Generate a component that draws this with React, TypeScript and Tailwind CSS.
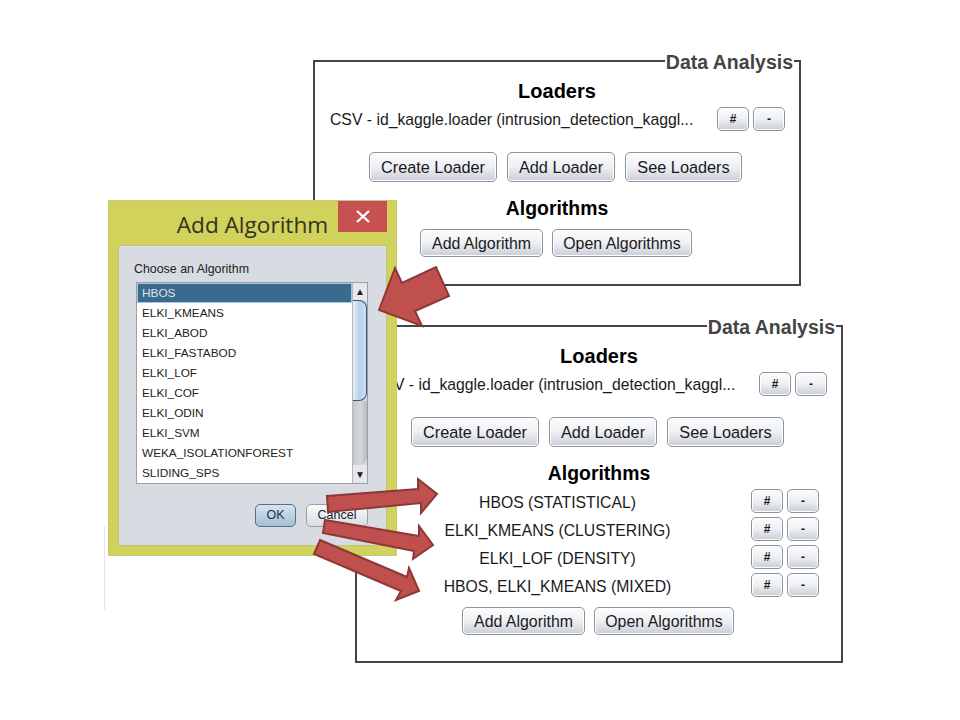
import React from 'react';

const SANS = "font-['Liberation_Sans',Arial,sans-serif]";

const JavaButton = ({ label, className }: { label: string; className: string }) => (
  <button className={`flex items-center justify-center rounded-[5px] border border-[#8b929a] bg-gradient-to-b from-[#fbfcfd] via-[#eef0f4] to-[#c9ced6] text-[#1a1a1a] shadow-[inset_0_0_0_1px_#ffffff] ${className}`}>
    {label}
  </button>
);

const RowButtons = () => (
  <div className="flex gap-1">
    <JavaButton label="#" className="h-6 w-8 text-xs font-bold" />
    <JavaButton label="-" className="h-6 w-8 text-xs font-bold" />
  </div>
);

const LoaderBlock = ({ loaderText }: { loaderText: string }) => (
  <>
    <div className="h-[30px] text-center text-xl leading-[30px] font-bold text-black">Loaders</div>
    <div className="mt-[1px] flex h-6 items-center">
      <div className="w-[402px] overflow-hidden pt-[2px] pl-[15px] text-[15.75px] whitespace-nowrap text-[#1a1a1a]">{loaderText}</div>
      <RowButtons />
    </div>
    <div className="mt-[21px] ml-[54px] flex gap-[10px] text-[16.3px]">
      <JavaButton label="Create Loader" className="h-[30px] w-[128px] pt-[1px]" />
      <JavaButton label="Add Loader" className="h-[30px] w-[108px] pt-[1px]" />
      <JavaButton label="See Loaders" className="h-[30px] w-[117px] pt-[1px]" />
    </div>
    <div className="mt-[11px] h-[30px] text-center text-[19.4px] leading-[30px] font-bold text-black">Algorithms</div>
  </>
);

const AlgorithmButtons = () => (
  <div className="flex justify-center gap-[9px] pr-[2px] text-[15.9px]">
    <JavaButton label="Add Algorithm" className="h-[28px] w-[123px] pt-[1px]" />
    <JavaButton label="Open Algorithms" className="h-[28px] w-[140px] pt-[1px]" />
  </div>
);

const PanelTitle = () => (
  <div className="absolute top-[-12px] right-[5px] bg-white px-[1px] text-[19.5px] leading-[24px] font-bold text-[#444444]">
    Data Analysis
  </div>
);

const algorithms = [
  'HBOS',
  'ELKI_KMEANS',
  'ELKI_ABOD',
  'ELKI_FASTABOD',
  'ELKI_LOF',
  'ELKI_COF',
  'ELKI_ODIN',
  'ELKI_SVM',
  'WEKA_ISOLATIONFOREST',
  'SLIDING_SPS',
];

const results = [
  'HBOS (STATISTICAL)',
  'ELKI_KMEANS (CLUSTERING)',
  'ELKI_LOF (DENSITY)',
  'HBOS, ELKI_KMEANS (MIXED)',
];

const AlgorithmDialog = () => (
  <div className="absolute top-[200px] left-[108px] flex h-[356px] w-[289px] flex-col border border-[#c6c87a] bg-[#d0d25c]">
    <div className="flex h-[44px] shrink-0 items-start justify-between">
      <div className="w-[287px] pt-[9px] text-center font-['Open_Sans',sans-serif] text-[22.6px] leading-[30px] text-[#333322]">
        Add Algorithm
      </div>
      <div className="absolute top-0 right-[9px] flex h-[31px] w-[49px] items-center justify-center bg-[#c75050]">
        <svg width="14" height="13" viewBox="0 0 14 13" fill="none" stroke="#ffffff" strokeWidth="2.2">
          <path d="M1 1 L13 12 M13 1 L1 12" />
        </svg>
      </div>
    </div>
    <div className="mx-[9px] flex h-[301px] flex-col border border-[#c0c285] bg-[#d8dbe2] px-[17px]">
      <div className="mt-[16px] -ml-[2px] h-[15px] text-[12.4px] leading-[15px] text-[#222222]">Choose an Algorithm</div>
      <div className="mt-[5px] flex h-[202px] w-[232px] border border-[#9aa0a8] bg-white">
        <div className="flex-1 text-[11.8px] text-[#222222]">
          {algorithms.map((name, i) => (
            <div
              key={name}
              className={
                i === 0
                  ? 'flex h-[20px] items-center border border-[#a9c4dc] bg-[#3a6a8e] pt-[1px] pl-[4px] text-[#dbe6ee]'
                  : 'flex h-[20px] items-center pt-[1px] pl-[5px]'
              }
            >
              {name}
            </div>
          ))}
        </div>
        <div className="flex w-[15px] flex-col items-center border-l border-[#b4b8be] bg-[#d7d9dd]">
          <div className="flex h-[17px] w-full shrink-0 items-center justify-center bg-[#e6e8eb] text-[10px] text-[#222222]">▲</div>
          <div className="h-[101px] w-full shrink-0 rounded-r-[8px] border-y border-r border-[#38567a] bg-gradient-to-r from-[#e4eef6] via-[#b9d2e8] to-[#cfe0ef]" />
          <div className="w-full flex-1 rounded-br-[8px] bg-gradient-to-r from-[#c4c6ca] via-[#d8d9dc] to-[#b8babe]" />
          <div className="flex h-[18px] w-full shrink-0 items-center justify-center bg-[#e6e8eb] text-[10px] text-[#222222]">▼</div>
        </div>
      </div>
      <div className="mt-[20px] ml-[119px] flex gap-[10px] text-[12.5px]">
        <button className="flex h-[23px] w-[41px] items-center justify-center rounded-[5px] border border-[#54708c] bg-gradient-to-b from-[#d5e3ee] to-[#a6bfd4] text-[#223344]">OK</button>
        <button className="flex h-[23px] w-[62px] items-center justify-center rounded-[5px] border border-[#9aa0a8] bg-gradient-to-b from-[#fbfcfd] to-[#d8dbe2] text-[#222222]">Cancel</button>
      </div>
    </div>
  </div>
);

const Arrows = () => (
  <svg className="absolute top-0 left-0" width="960" height="720" viewBox="0 0 960 720" fill="#c0504d" stroke="#8c3836" strokeWidth="2" strokeLinejoin="miter">
    <path d="M379 310 L395 268 L402 283 L436 267 L449 296 L415 311 L422 326 Z" />
    <path d="M327 496 L418 489 L418 479 L437 494 L421 513 L421 503 L328 512 Z" />
    <path d="M325 520 L419 536 L419 526 L433 545 L413 559 L414 551 L323 533 Z" />
    <path d="M320 540 L407 577 L409 568 L419 591 L396 600 L401 591 L314 554 Z" />
    {/* stray crop marks left of the dialog */}
    <path d="M104.5 526 L104.5 610" fill="none" stroke="#e4e4e4" strokeWidth="1" />
  </svg>
);

export default function App() {
  return (
    <div className={`relative h-[720px] w-[960px] overflow-hidden bg-white ${SANS}`}>
      {/* first panel, before any algorithm was added */}
      <section className="absolute top-[60px] left-[313px] h-[226px] w-[488px] border-2 border-[#444444] pt-[14px]">
        <PanelTitle />
        <LoaderBlock loaderText="CSV - id_kaggle.loader (intrusion_detection_kaggl..." />
        <div className="mt-[6px]">
          <AlgorithmButtons />
        </div>
      </section>

      {/* second panel, with the added algorithms */}
      <section className="absolute top-[325px] left-[355px] h-[338px] w-[488px] border-2 border-[#444444] pt-[14px]">
        <PanelTitle />
        <LoaderBlock loaderText="CSV - id_kaggle.loader (intrusion_detection_kaggl..." />
        <div className="mt-[1px] flex flex-col gap-[4px]">
          {results.map((r) => (
            <div key={r} className="flex h-6 items-center text-[15.75px] text-[#1a1a1a]">
              <div className="w-[394px] pt-[3px] pl-[7px] text-center">{r}</div>
              <RowButtons />
            </div>
          ))}
        </div>
        <div className="mt-[10px]">
          <AlgorithmButtons />
        </div>
      </section>

      <AlgorithmDialog />
      <Arrows />
    </div>
  );
}
